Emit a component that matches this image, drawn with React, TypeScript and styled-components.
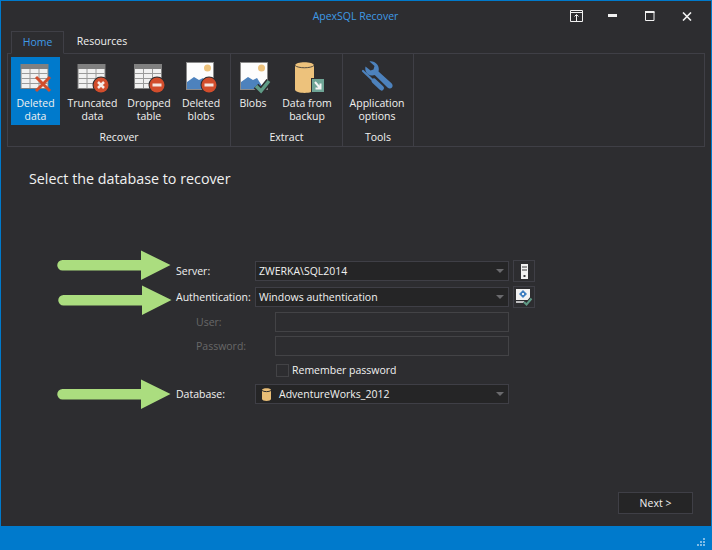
import React from "react";
import styled, { createGlobalStyle } from "styled-components";

const GlobalStyle = createGlobalStyle`
  html, body, #root {
    margin: 0;
    height: 100%;
  }
  body {
    background: #2d2d30;
    font-family: "Open Sans", "Liberation Sans", sans-serif;
    font-size: 10.5px;
    color: #f1f1f1;
    overflow: hidden;
  }
`;

const Window = styled.div`
  display: flex;
  flex-direction: column;
  height: 550px;
  box-sizing: border-box;
  border: 1px solid #007acc;
  border-bottom: 0;
  background: #2d2d30;
`;

const TitleBar = styled.div`
  position: relative;
  display: flex;
  justify-content: center;
  align-items: center;
  height: 30px;
  flex: none;
`;

const Title = styled.div`
  color: #3f9be6;
  font-size: 10.5px;
  margin: 0 1px 1px 0;
`;

const WindowControls = styled.div`
  position: absolute;
  top: 0;
  right: 6px;
  display: flex;
  height: 30px;
  align-items: center;
`;

const ControlSlot = styled.div`
  width: 37px;
  height: 30px;
  display: flex;
  align-items: center;
  justify-content: center;
`;

const TabStrip = styled.div`
  display: flex;
  height: 22px;
  flex: none;
  padding-left: 10px;
  position: relative;
  z-index: 1;
`;

const Tab = styled.div<{ $active?: boolean }>`
  width: ${(p) => (p.$active ? "53px" : "76px")};
  box-sizing: border-box;
  text-align: center;
  line-height: 21px;
  color: ${(p) => (p.$active ? "#3f9be6" : "#f1f1f1")};
  font-size: 10.5px;
  ${(p) =>
    p.$active &&
    `border: 1px solid #3f3f46;
     border-bottom: 1px solid #2d2d30;
     height: 23px;`}
`;

const Ribbon = styled.div`
  display: flex;
  height: 94px;
  flex: none;
  box-sizing: border-box;
  margin: 0 6px;
  border: 1px solid #3f3f46;
`;

const Group = styled.div<{ $width: number }>`
  display: flex;
  flex-direction: column;
  width: ${(p) => p.$width}px;
  box-sizing: border-box;
  border-right: 1px solid #3f3f46;
  flex: none;
`;

const GroupItems = styled.div<{ $gap: number; $pad: number }>`
  display: flex;
  gap: ${(p) => p.$gap}px;
  padding: 3px 0 0 ${(p) => p.$pad}px;
  height: 72px;
  flex: none;
`;

const GroupLabel = styled.div`
  text-align: center;
  font-size: 10.5px;
  line-height: 16px;
  color: #f1f1f1;
`;

const RibbonButton = styled.div<{ $width: number; $active?: boolean }>`
  width: ${(p) => p.$width}px;
  height: 68px;
  flex: none;
  display: flex;
  flex-direction: column;
  align-items: center;
  background: ${(p) => (p.$active ? "#007acc" : "transparent")};
`;

const RibbonIcon = styled.svg`
  width: 36px;
  height: 36px;
  margin-top: 3px;
  flex: none;
`;

const RibbonText = styled.div`
  margin-top: 1px;
  text-align: center;
  font-size: 10.5px;
  line-height: 13px;
  white-space: pre-line;
  color: #f1f1f1;
`;

const Content = styled.div`
  position: relative;
  flex: 1;
  display: flex;
  flex-direction: column;
  min-height: 0;
`;

const Heading = styled.div`
  margin: 23px 0 0 28px;
  font-size: 14.3px;
  line-height: 18px;
  color: #f1f1f1;
`;

const Form = styled.div`
  display: flex;
  flex-direction: column;
  margin: 73px 0 0 175px;
`;

const Row = styled.div<{ $top: number }>`
  display: flex;
  align-items: center;
  margin-top: ${(p) => p.$top}px;
  height: 20px;
`;

const Label = styled.div<{ $disabled?: boolean }>`
  width: ${(p) => (p.$disabled ? "59px" : "79px")};
  margin-left: ${(p) => (p.$disabled ? "20px" : "0")};
  flex: none;
  font-size: 10.5px;
  color: ${(p) => (p.$disabled ? "#686868" : "#f1f1f1")};
  white-space: nowrap;
`;

const Combo = styled.div<{ $indent?: number }>`
  position: relative;
  display: flex;
  align-items: center;
  gap: 8px;
  width: 254px;
  height: 20px;
  box-sizing: border-box;
  padding-left: ${(p) => p.$indent ?? 3}px;
  flex: none;
  background: #252526;
  border: 1px solid #3f3f46;
  font-size: 10.5px;
  color: #f1f1f1;
`;

const ComboArrow = styled.span`
  position: absolute;
  right: 4px;
  top: 7px;
  border-left: 4px solid transparent;
  border-right: 4px solid transparent;
  border-top: 4px solid #6a6a6d;
`;

const DisabledInput = styled.div`
  width: 234px;
  height: 20px;
  margin-left: 20px;
  box-sizing: border-box;
  flex: none;
  border: 1px solid #434346;
`;

const SideButton = styled.div`
  width: 22px;
  height: 22px;
  margin-left: 4px;
  box-sizing: border-box;
  flex: none;
  display: flex;
  align-items: center;
  justify-content: center;
  background: #2d2d30;
  border: 1px solid #3f3f46;
`;

const CheckRow = styled.div`
  display: flex;
  align-items: center;
  gap: 3px;
  margin-left: 100px;
  font-size: 10.5px;
  color: #f1f1f1;
`;

const CheckBox = styled.span`
  width: 13px;
  height: 13px;
  box-sizing: border-box;
  border: 1px solid #434346;
`;

const Arrow = styled.svg<{ $left: number; $top: number }>`
  position: absolute;
  left: ${(p) => p.$left}px;
  top: ${(p) => p.$top}px;
  width: 116px;
  height: 31px;
`;

const Footer = styled.div`
  margin-top: auto;
  display: flex;
  justify-content: flex-end;
  padding: 0 18px 12px 0;
`;

const NextButton = styled.div`
  width: 75px;
  height: 22px;
  box-sizing: border-box;
  background: #252526;
  border: 1px solid #3f3f46;
  text-align: center;
  line-height: 20px;
  font-size: 10.5px;
  color: #f1f1f1;
`;

const StatusBar = styled.div`
  height: 24px;
  box-sizing: border-box;
  flex: none;
  margin: 0 -1px;
  background: #007acc;
  display: flex;
  justify-content: flex-end;
  align-items: flex-end;
  padding: 0 7px 4px 0;
`;

function TableShape({ x = 3 }: { x?: number }) {
  return (
    <g transform={`translate(${x} 0)`}>
      <rect x="0" y="4" width="28" height="25" fill="#808080" />
      <rect x="1" y="9" width="26" height="19" fill="#f1f1f1" />
      <path d="M9.500 9v19M18.500 9v19M1 13.500h26M1 18.500h26M1 23.500h26" stroke="#9a9a9a" strokeWidth="1" fill="none" />
    </g>
  );
}

function Badge({ x = 26, y = 25, children }: { x?: number; y?: number; children: React.ReactNode }) {
  return (
    <g>
      <circle cx={x} cy={y} r="8.500" fill="#2d2d30" />
      <circle cx={x} cy={y} r="7.500" fill="#d24d2c" />
      {children}
    </g>
  );
}

function Minus({ x = 26, y = 25 }: { x?: number; y?: number }) {
  return <rect x={x - 4.5} y={y - 1.5} width="9" height="3" fill="#f4e6e0" />;
}

function Picture({ x = 3 }: { x?: number }) {
  return (
    <g transform={`translate(${x} 0)`}>
      <rect x="0.500" y="2.500" width="27" height="27" fill="#fdfdfd" stroke="#8a8a8a" />
      <circle cx="21.500" cy="8" r="3.500" fill="#edc27c" />
      <path d="M1 29V22l7-5 5 3 4-2 7 11z" fill="#4d82bd" />
    </g>
  );
}

function DeletedDataIcon() {
  return (
    <RibbonIcon viewBox="0 0 36 36">
      <TableShape x={2.5} />
      <path d="M18 17l14 14M32 17L18 31" stroke="#d24d2c" strokeWidth="3" fill="none" />
    </RibbonIcon>
  );
}

function TruncatedIcon() {
  return (
    <RibbonIcon viewBox="0 0 36 36">
      <TableShape x={2.5} />
      <Badge>
        <path d="M23 22l6 6M29 22l-6 6" stroke="#f7ece8" strokeWidth="2.500" fill="none" />
      </Badge>
    </RibbonIcon>
  );
}

function DroppedIcon() {
  return (
    <RibbonIcon viewBox="0 0 36 36">
      <TableShape x={3} />
      <Badge>
        <Minus />
      </Badge>
    </RibbonIcon>
  );
}

function BlobsDeletedIcon() {
  return (
    <RibbonIcon viewBox="0 0 36 36">
      <Picture x={3} />
      <Badge>
        <Minus />
      </Badge>
    </RibbonIcon>
  );
}

function BlobsIcon() {
  return (
    <RibbonIcon viewBox="0 0 36 36">
      <Picture x={5} />
      <path d="M21 26l5 5 8-10" stroke="#2d2d30" strokeWidth="6.500" fill="none" />
      <path d="M21 26l5 5 8-10" stroke="#5f9b86" strokeWidth="3.500" fill="none" />
    </RibbonIcon>
  );
}

function BackupIcon() {
  return (
    <RibbonIcon viewBox="0 0 36 36">
      <path d="M6 5.500c0-4.500 19-4.500 19 0v24c0 4.500-19 4.500-19 0z" fill="#edc27c" />
      <path d="M6 5.500c3 3 16 3 19 0" stroke="#2d2d30" strokeWidth="0.800" fill="none" />
      <rect x="22" y="18" width="14" height="15" fill="#2d2d30" />
      <rect x="23" y="19" width="12" height="13" fill="#6fa596" />
      <path d="M26 22l5 6M31.500 23.500v5h-5" stroke="#f4f4f4" strokeWidth="2" fill="none" />
    </RibbonIcon>
  );
}

function ToolsIcon() {
  return (
    <RibbonIcon viewBox="0 0 36 36">
      <path
        d="M10.500 1.500l5 4.500-1 3.500-3 1-5-4c-1 4 1 8.500 6 9 1.500 0 2.500-.2 3.200-.5L28.500 27.500c1.500 1.500 3.500 1.200 4.500 0s.7-3-.5-4.200L19.500 11.500c.7-2 .4-5-1.500-7.200-2-2.300-5-3.300-7.500-2.800z"
        fill="#4d82bd"
      />
      <path d="M4 11l9 8.500" stroke="#4d82bd" strokeWidth="2.200" strokeLinecap="round" />
      <path d="M15 21l7.500 7" stroke="#4d82bd" strokeWidth="5" strokeLinecap="round" />
    </RibbonIcon>
  );
}

function ArrowShape({ left, top }: { left: number; top: number }) {
  return (
    <Arrow $left={left} $top={top} viewBox="0 0 116 31">
      <path
        d="M5.500 10H84V0.500L113.500 15 84 30V20.500H5.500a5.250 5.250 0 0 1 0-10.500z"
        fill="#abdd7f"
      />
    </Arrow>
  );
}

export default function App() {
  return (
    <Window>
      <GlobalStyle />
      <TitleBar>
        <Title>ApexSQL Recover</Title>
        <WindowControls>
          <ControlSlot>
            <svg width="14" height="12" viewBox="0 0 14 12">
              <path d="M1.500.500h12v11h-12zM1.500 2.500h12M7.500 11V5M5.500 6.500l2-2 2 2" stroke="#f1f1f1" fill="none" />
            </svg>
          </ControlSlot>
          <ControlSlot>
            <svg width="10" height="4" viewBox="0 0 10 4">
              <rect width="9" height="3" y="0" fill="#f1f1f1" />
            </svg>
          </ControlSlot>
          <ControlSlot>
            <svg width="10" height="10" viewBox="0 0 10 10">
              <path d="M.5 1h8.500v8.500H.5z" stroke="#f1f1f1" fill="none" />
              <rect x="0" y="0" width="9.500" height="2" fill="#f1f1f1" />
            </svg>
          </ControlSlot>
          <ControlSlot>
            <svg width="10" height="9" viewBox="0 0 10 9">
              <path d="M1 .500l8 8M9 .500l-8 8" stroke="#f1f1f1" strokeWidth="1.600" fill="none" />
            </svg>
          </ControlSlot>
        </WindowControls>
      </TitleBar>
      <TabStrip>
        <Tab $active>Home</Tab>
        <Tab>Resources</Tab>
      </TabStrip>
      <Ribbon>
        <Group $width={223}>
          <GroupItems $gap={5} $pad={3}>
            <RibbonButton $width={49} $active>
              <DeletedDataIcon />
              <RibbonText>{"Deleted\ndata"}</RibbonText>
            </RibbonButton>
            <RibbonButton $width={55}>
              <TruncatedIcon />
              <RibbonText>{"Truncated\ndata"}</RibbonText>
            </RibbonButton>
            <RibbonButton $width={48}>
              <DroppedIcon />
              <RibbonText>{"Dropped\ntable"}</RibbonText>
            </RibbonButton>
            <RibbonButton $width={46}>
              <BlobsDeletedIcon />
              <RibbonText>{"Deleted\nblobs"}</RibbonText>
            </RibbonButton>
          </GroupItems>
          <GroupLabel>Recover</GroupLabel>
        </Group>
        <Group $width={112}>
          <GroupItems $gap={10} $pad={5}>
            <RibbonButton $width={34}>
              <BlobsIcon />
              <RibbonText>Blobs</RibbonText>
            </RibbonButton>
            <RibbonButton $width={54}>
              <BackupIcon />
              <RibbonText>{"Data from\nbackup"}</RibbonText>
            </RibbonButton>
          </GroupItems>
          <GroupLabel>Extract</GroupLabel>
        </Group>
        <Group $width={71}>
          <GroupItems $gap={0} $pad={4}>
            <RibbonButton $width={60}>
              <ToolsIcon />
              <RibbonText>{"Application\noptions"}</RibbonText>
            </RibbonButton>
          </GroupItems>
          <GroupLabel>Tools</GroupLabel>
        </Group>
      </Ribbon>
      <Content>
        <Heading>Select the database to recover</Heading>
        <Form>
          <Row $top={0}>
            <Label>Server:</Label>
            <Combo>
              ZWERKA\SQL2014
              <ComboArrow />
            </Combo>
            <SideButton>
              <svg width="7" height="15" viewBox="0 0 7 15">
                <rect width="7" height="15" fill="#f1f1f1" />
                <path d="M1 3h5M1 6h5" stroke="#3a3a3c" strokeWidth="1" />
                <rect x="2.500" y="11" width="2" height="2" fill="#3a3a3c" />
              </svg>
            </SideButton>
          </Row>
          <Row $top={6}>
            <Label>Authentication:</Label>
            <Combo>
              Windows authentication
              <ComboArrow />
            </Combo>
            <SideButton>
              <svg width="18" height="18" viewBox="0 0 18 18">
                <rect x="1" y="1" width="14" height="11" fill="#f1f1f1" />
                <path d="M1 14h8" stroke="#f1f1f1" strokeWidth="1.500" />
                <path d="M8 2l4 4-4 4-4-4z" fill="#3f7fc0" />
                <rect x="7" y="5" width="2" height="2" fill="#f1f1f1" />
                <path d="M9 14l2.500 2.500 5-6" stroke="#2d2d30" strokeWidth="4" fill="none" />
                <path d="M9 14l2.500 2.500 5-6" stroke="#5f9b86" strokeWidth="2" fill="none" />
              </svg>
            </SideButton>
          </Row>
          <Row $top={5}>
            <Label $disabled>User:</Label>
            <DisabledInput />
          </Row>
          <Row $top={4}>
            <Label $disabled>Password:</Label>
            <DisabledInput />
          </Row>
          <Row $top={4}>
            <CheckRow>
              <CheckBox />
              Remember password
            </CheckRow>
          </Row>
          <Row $top={4}>
            <Label>Database:</Label>
            <Combo $indent={6}>
              <svg width="9" height="13" viewBox="0 0 9 13">
                <path d="M0 2c0-2.500 9-2.500 9 0v9c0 2.500-9 2.500-9 0z" fill="#e8bd76" />
                <path d="M0 2.500c2 1.500 7 1.500 9 0" stroke="#2d2d30" fill="none" />
              </svg>
              AdventureWorks_2012
              <ComboArrow />
            </Combo>
          </Row>
        </Form>
        <ArrowShape left={56} top={103} />
        <ArrowShape left={57} top={138} />
        <ArrowShape left={56} top={232} />
        <Footer>
          <NextButton>{"Next >"}</NextButton>
        </Footer>
      </Content>
      <StatusBar>
        <svg width="8" height="8" viewBox="0 0 8 8">
          <path
            d="M6 0h2v2H6zM3 3h2v2H3zM6 3h2v2H6zM0 6h2v2H0zM3 6h2v2H3zM6 6h2v2H6z"
            fill="#7fbce6"
          />
        </svg>
      </StatusBar>
    </Window>
  );
}
